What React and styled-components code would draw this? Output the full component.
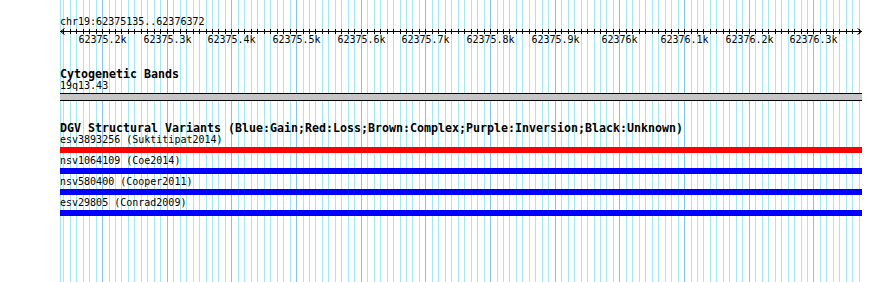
import styled, { createGlobalStyle } from 'styled-components';

const START = 62375135;
const END = 62376372;
const LEFT = 60;
const WIDTH = 800;
const SCALE = WIDTH / (END - START);

const toX = bp => LEFT + (bp - START) * SCALE;

const GlobalStyle = createGlobalStyle`
  body {
    margin: 0;
    background: #fff;
    font-family: "DejaVu Sans Mono", "Liberation Mono", monospace;
  }
`;

const Canvas = styled.div`
  position: relative;
  width: 890px;
  height: 282px;
  overflow: hidden;
  background: #fff;
`;

const GridLayer = styled.svg`
  position: absolute;
  top: 0;
  left: 0;
  width: 890px;
  height: 282px;
  shape-rendering: crispEdges;
`;

const Panel = styled.div`
  position: relative;
  width: 802px;
  margin-left: ${LEFT}px;
  display: flex;
  flex-direction: column;
  color: #000;
`;

const Label = styled.div`
  font-size: 10px;
  line-height: 11px;
  height: 11px;
  white-space: pre;
  margin-top: ${p => p.$top || 0}px;
`;

const TrackTitle = styled.div`
  font-size: 11.63px;
  font-weight: bold;
  line-height: 12px;
  height: 12px;
  white-space: pre;
  margin-top: ${p => p.$top || 0}px;
`;

const RulerSvg = styled.svg`
  display: block;
  width: 802px;
  height: 18px;
  shape-rendering: crispEdges;
  font-family: "DejaVu Sans Mono", "Liberation Mono", monospace;
  font-size: 10px;
`;

const Band = styled.div`
  margin-top: 2px;
  height: 6px;
  border-top: 1px solid #000;
  border-bottom: 1px solid #000;
  background: #c6c6c6;
`;

const Bar = styled.div`
  margin-top: 2px;
  margin-bottom: 2px;
  height: 6px;
  background: ${p => (p.$kind === 'loss' ? '#ff0000' : '#0000ff')};
`;

const gridLines = [];
for (let bp = Math.ceil(START / 10) * 10; bp <= END; bp += 10) {
  gridLines.push({ x: Math.round(toX(bp)), major: bp % 100 === 0 });
}

const majorLabels = [];
for (let bp = Math.ceil(START / 100) * 100; bp <= END; bp += 100) {
  majorLabels.push({ x: Math.round(toX(bp)), text: (bp / 1000).toFixed(1).replace(/\.0$/, '') + 'k' });
}

const variants = [
  { id: 'esv3893256', study: 'Suktitipat2014', kind: 'loss' },
  { id: 'nsv1064109', study: 'Coe2014', kind: 'gain' },
  { id: 'nsv580400', study: 'Cooper2011', kind: 'gain' },
  { id: 'esv29805', study: 'Conrad2009', kind: 'gain' },
];

const Ruler = () => {
  const y = 4;
  const right = 802;
  return (
    <RulerSvg viewBox="0 0 802 18">
      <rect x="0" y={y} width={right} height="1" fill="#000" />
      <path d={`M0.5 ${y + 0.5} L4.5 ${y - 2.5} M0.5 ${y + 0.5} L4.5 ${y + 3.5}`} stroke="#000" fill="none" shapeRendering="auto" />
      <path d={`M${right - 0.5} ${y + 0.5} L${right - 4.5} ${y - 2.5} M${right - 0.5} ${y + 0.5} L${right - 4.5} ${y + 3.5}`} stroke="#000" fill="none" shapeRendering="auto" />
      {gridLines.map(l => (
        <rect key={l.x} x={l.x - LEFT} y={y - 2} width="1" height="5" fill="#000" />
      ))}
      {majorLabels.map(l => (
        <text key={l.text} x={l.x - LEFT + 0.5} y="16" textAnchor="middle" fill="#000">
          {l.text}
        </text>
      ))}
    </RulerSvg>
  );
};

const App = () => (
  <Canvas>
    <GlobalStyle />
    <GridLayer viewBox="0 0 890 282">
      <rect x={LEFT} y="0" width="1" height="282" fill="#a6e8ef" />
      {gridLines.map(l => (
        <rect key={l.x} x={l.x} y="0" width="1" height="282" fill={l.major ? '#84c4e8' : '#a6e8ef'} />
      ))}
    </GridLayer>
    <Panel>
      <Label $top={16}>chr19:62375135..62376372</Label>
      <Ruler />
      <TrackTitle $top={23}>Cytogenetic Bands</TrackTitle>
      <Label>19q13.43</Label>
      <Band />
      <TrackTitle $top={21}>DGV Structural Variants (Blue:Gain;Red:Loss;Brown:Complex;Purple:Inversion;Black:Unknown)</TrackTitle>
      {variants.map(v => (
        <div key={v.id}>
          <Label>{`${v.id} (${v.study})`}</Label>
          <Bar $kind={v.kind} />
        </div>
      ))}
    </Panel>
  </Canvas>
);

export default App;
